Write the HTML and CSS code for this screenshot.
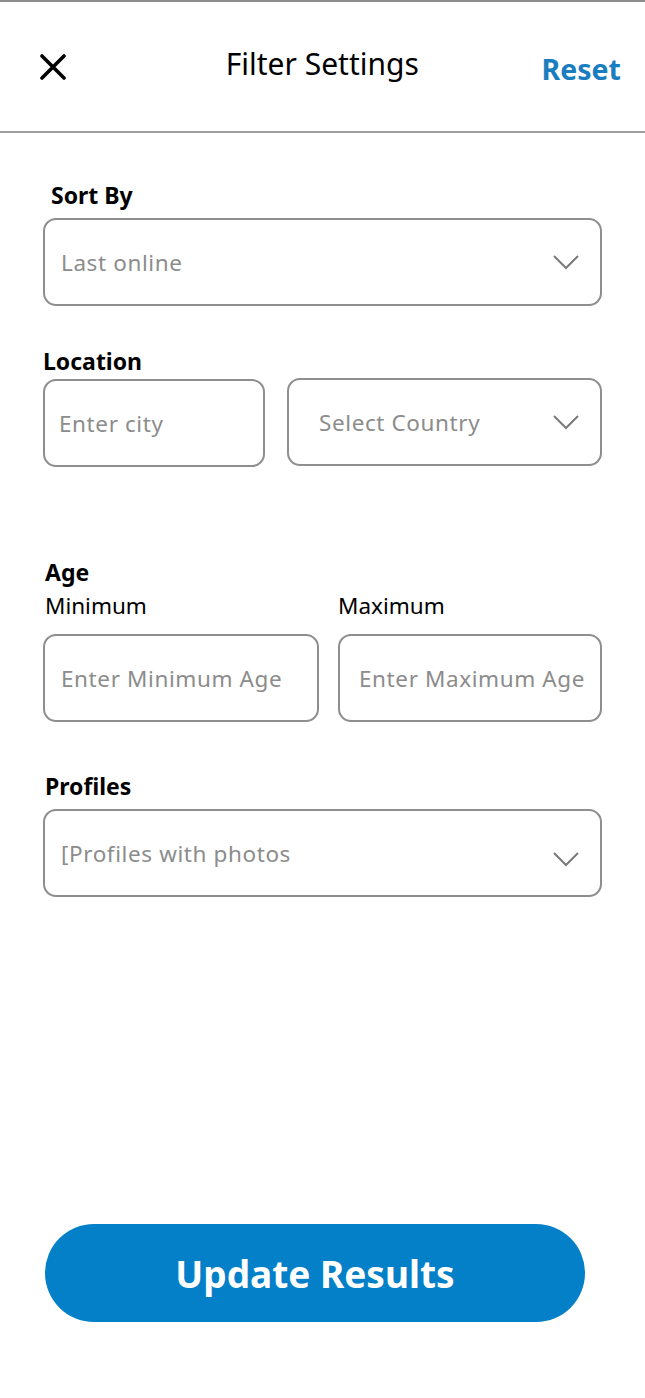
FILE: index.html
```html
<!DOCTYPE html>
<html lang="en">
<head>
<meta charset="utf-8">
<title>Filter Settings</title>
<link rel="stylesheet" href="styles.css">
</head>
<body>
<div class="page">
  <header class="header">
    <button class="close" aria-label="Close">
      <svg width="26" height="26" viewBox="0 0 26 26"><path d="M2 2 L24 24 M24 2 L2 24" stroke="#000" stroke-width="3.6" stroke-linecap="round" fill="none"/></svg>
    </button>
    <h1 class="title">Filter Settings</h1>
    <a class="reset" href="#">Reset</a>
  </header>

  <main class="content">
    <section class="section sort">
      <div class="label label-indent">Sort By</div>
      <div class="field field-select">
        <span class="placeholder">Last online</span>
        <svg class="chev" width="28" height="16" viewBox="0 0 28 16"><path d="M2 2 L14 14 L26 2" stroke="#7a7a7a" stroke-width="2" fill="none"/></svg>
      </div>
    </section>

    <section class="section location">
      <div class="label">Location</div>
      <div class="row row-location">
        <div class="field field-city"><span class="placeholder">Enter city</span></div>
        <div class="field field-select field-country">
          <span class="placeholder">Select Country</span>
          <svg class="chev" width="28" height="16" viewBox="0 0 28 16"><path d="M2 2 L14 14 L26 2" stroke="#7a7a7a" stroke-width="2" fill="none"/></svg>
        </div>
      </div>
    </section>

    <section class="section age">
      <div class="label">Age</div>
      <div class="row row-age">
        <div class="col col-min">
          <div class="sublabel">Minimum</div>
          <div class="field"><span class="placeholder">Enter Minimum Age</span></div>
        </div>
        <div class="col col-max">
          <div class="sublabel sublabel-max">Maximum</div>
          <div class="field field-max"><span class="placeholder">Enter Maximum Age</span></div>
        </div>
      </div>
    </section>

    <section class="section profiles">
      <div class="label">Profiles</div>
      <div class="field field-select field-profiles">
        <span class="placeholder">[Profiles with photos</span>
        <svg class="chev chev-low" width="28" height="16" viewBox="0 0 28 16"><path d="M2 2 L14 14 L26 2" stroke="#7a7a7a" stroke-width="2" fill="none"/></svg>
      </div>
    </section>

    <button class="update">Update Results</button>
  </main>
</div>
</body>
</html>
```

FILE: styles.css
```css
* { box-sizing: border-box; }
html, body { margin: 0; padding: 0; background: #fff; }
body { font-family: "Noto Sans", "Open Sans", sans-serif; color: #000; }

.page {
  min-height: 1398px;
  display: flex;
  flex-direction: column;
  border-top: 2px solid #8c8c8c;
}

.header {
  height: 131px;
  border-bottom: 2px solid #a0a0a0;
  display: flex;
  align-items: center;
  justify-content: space-between;
  padding: 0 24px 0 39px;
}
.close {
  background: none;
  border: 0;
  padding: 0;
  width: 28px;
  height: 28px;
  display: flex;
  align-items: center;
  justify-content: center;
  margin-top: 1px;
}
.title {
  margin: 0;
  font-weight: 400;
  font-size: 30px;
  line-height: 36px;
  margin-left: 36px;
  margin-bottom: 6px;
}
.reset {
  color: #1a7dbf;
  font-weight: 700;
  font-size: 28.5px;
  line-height: 34px;
  text-decoration: none;
  margin-top: 4px;
}

.content {
  flex: 1;
  display: flex;
  flex-direction: column;
  padding: 0 43px 76px 43px;
}

.label {
  font-size: 23px;
  line-height: 26px;
  font-weight: 700;
}
.label-indent { padding-left: 8px; }
.sublabel {
  font-size: 22.5px;
  line-height: 26px;
  font-weight: 400;
  padding-left: 2px;
}
.sublabel-max { padding-left: 0; }

.field {
  height: 88px;
  border: 2px solid #8e8e8e;
  border-radius: 13px;
  display: flex;
  align-items: center;
  padding: 0 16px;
}
.placeholder {
  font-size: 22.5px;
  letter-spacing: 0.6px;
  color: #8c8c8c;
}
.field-select { justify-content: space-between; padding-right: 20px; }
.chev { flex: none; }
.chev-low { margin-top: 12px; }

.sort { margin-top: 49px; }
.sort .label { margin-bottom: 10px; }

.location { margin-top: 42px; }
.location .label { margin-bottom: 4px; }
.row { display: flex; }
.row-location { gap: 22px; align-items: flex-start; }
.field-city { width: 222px; margin-top: 1px; padding-left: 14px; }
.field-country { flex: 1; padding-left: 30px; }

.age { margin-top: 92px; }
.age .label { padding-left: 2px; margin-bottom: 8px; }
.row-age { gap: 19px; }
.col { display: flex; flex-direction: column; gap: 15px; }
.col-min { width: 276px; }
.col-max { flex: 1; }
.field-max { padding-left: 19px; padding-right: 6px; }

.profiles { margin-top: 51px; }
.profiles .label { padding-left: 2px; margin-bottom: 10px; }

.update {
  margin-top: auto;
  margin-left: 2px;
  width: 540px;
  height: 98px;
  border: 0;
  border-radius: 49px;
  background: #0480c9;
  color: #fff;
  font-family: "Noto Sans", "Open Sans", sans-serif;
  font-weight: 700;
  font-size: 37px;
}
```
